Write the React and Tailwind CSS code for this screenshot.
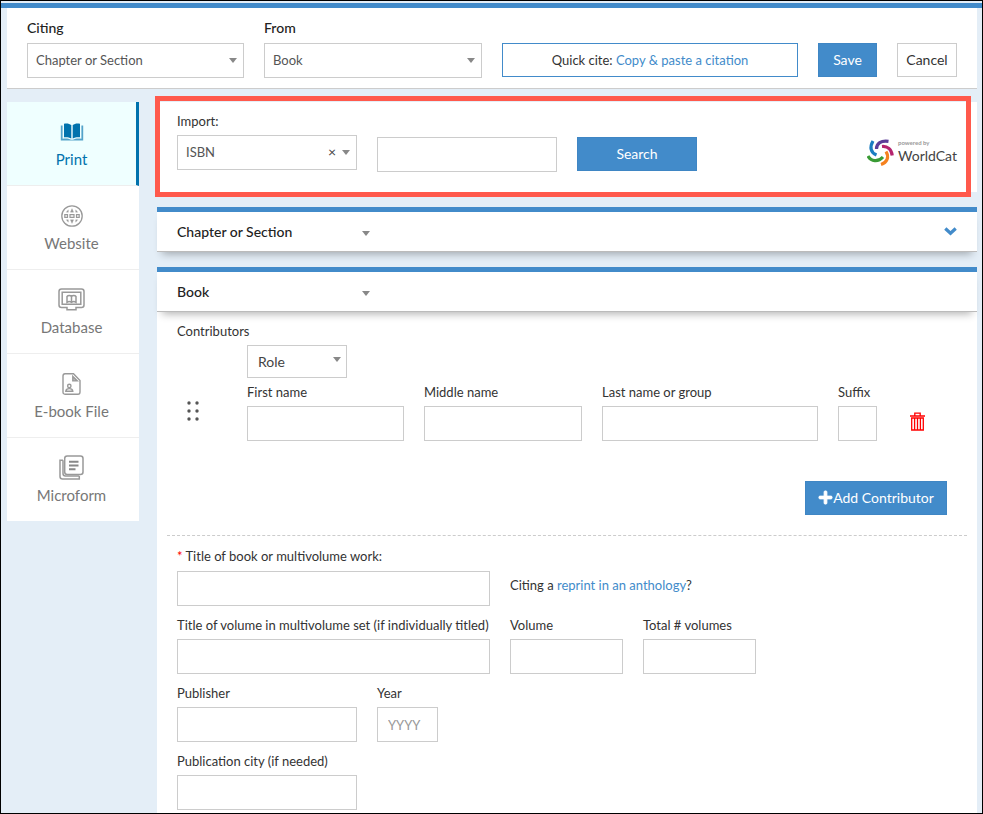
import { FaPlus } from 'react-icons/fa';

const INPUT = 'block w-full h-[35px] border border-[#ccc] bg-white px-[10px] text-[13px] text-[#555] placeholder:text-[#999]';
const SELECT = 'block h-[35px] w-full appearance-none border border-[#ccc] bg-white px-2 pb-0.5 text-[13px] text-[#555]';
const BLUE_BTN = 'bg-[#428bca] h-[34px] pb-px text-sm text-white border border-[#3f86c4] whitespace-nowrap';

function PrintIcon() {
  return (
    <svg width="24" height="18" viewBox="0 0 24 18" fill="currentColor">
      <path d="M4 .8C6.600 0 9.200 .4 11.300 2V15.600C9 14.200 6.400 13.900 4 14.300ZM20 .8C17.400 0 14.800 .4 12.700 2V15.600C15 14.200 17.600 13.900 20 14.300Z" />
      <path d="M.8 2.400H2.600V15.800C5.600 15.200 8.600 15.400 11 16.800H13C15.400 15.400 18.400 15.200 21.400 15.800V2.400H23.200V17.400H.8Z" opacity=".65" />
    </svg>
  );
}

function WebsiteIcon() {
  return (
    <svg width="22" height="22" viewBox="0 0 22 22" fill="none" stroke="currentColor">
      <circle cx="11" cy="11" r="10.200" strokeWidth="1.300" />
      <path d="M3.800 9.700h2.700v2.600H3.800zM9 9.700h4v2.600H9zM15.500 9.700h2.700v2.600H15.500z" strokeWidth="1.200" />
      <path d="M11 3.600L9.400 7.200h3.200ZM11 18.400L9.400 14.800h3.200ZM7.300 4.800L5.300 7.200H7.300ZM14.700 4.800L16.700 7.200H14.700ZM7.300 17.200L5.300 14.800H7.300ZM14.700 17.200L16.700 14.800H14.700Z" fill="currentColor" strokeWidth=".3" />
    </svg>
  );
}

function DatabaseIcon() {
  return (
    <svg width="27" height="23" viewBox="0 0 27 23" fill="none" stroke="currentColor" strokeWidth="1.500">
      <path d="M3.500 1H23.500Q26 1 26 3.500V17Q26 19.500 23.500 19.500H18V21.700H9V19.500H3.500Q1 19.500 1 17V3.500Q1 1 3.500 1Z" />
      <path d="M4.200 4.200H22.800V16.300H4.200Z" />
      <path d="M13.500 8.500C12.500 7 10 7 9 8.500V14.300C10.500 13.300 12 13.300 13.500 14.300C15 13.300 16.500 13.300 18 14.300V8.500C17 7 14.500 7 13.500 8.500V14" strokeWidth="1.500" />
    </svg>
  );
}

function EbookIcon() {
  return (
    <svg width="19" height="22" viewBox="0 0 19 22" fill="none" stroke="currentColor" strokeWidth="1.400">
      <path d="M3 .8H11.500L18 7.500V19Q18 21.200 16 21.200H3Q1 21.200 1 19V3Q1 .8 3 .8Z" />
      <path d="M10.800 3.400V7.900H15.300Z" fill="#bbb" />
      <circle cx="7.300" cy="13" r="1.700" />
      <path d="M3.800 18.200C4 15.800 5.600 15.600 7.300 15.600S10.600 15.800 10.800 18.200Z" />
    </svg>
  );
}

function MicroformIcon() {
  return (
    <svg width="25" height="25" viewBox="0 0 25 25" fill="none" stroke="currentColor" strokeWidth="1.500">
      <rect x="5.700" y="1" width="18.300" height="18.500" rx="2.500" />
      <path d="M4 5.200H1V21.500Q1 24 3.500 24H20.300V21M4 5.200V18.500Q4 21 6.500 21H20.300" />
      <path d="M10 6.700H19.500M10 10.500H19.500M10 14.300H16.500" strokeWidth="2" stroke="#888" />
    </svg>
  );
}

const SOURCES = [
  { label: 'Print', Icon: PrintIcon, active: true },
  { label: 'Website', Icon: WebsiteIcon },
  { label: 'Database', Icon: DatabaseIcon },
  { label: 'E-book File', Icon: EbookIcon },
  { label: 'Microform', Icon: MicroformIcon },
];

function Caret({ className = '' }) {
  return (
    <svg className={`pointer-events-none absolute ${className}`} width="8" height="5" viewBox="0 0 8 5" fill="#888">
      <path d="M0 0H8L4 5Z" />
    </svg>
  );
}

function Field({ id, label, required, placeholder, className = '', labelClass = 'mb-1' }) {
  return (
    <div className={className}>
      <label htmlFor={id} className={`block whitespace-nowrap ${labelClass}`}>
        {required && <span className="text-[#f00]">* </span>}
        {label}
      </label>
      <input id={id} type="text" placeholder={placeholder} className={INPUT} />
    </div>
  );
}

function TopSelect({ id, label, value }) {
  return (
    <div>
      <label htmlFor={id} className="mb-[5px] block text-sm leading-5 font-medium text-[#222]">{label}</label>
      <div className="relative">
        <select id={id} className={SELECT}>
          <option>{value}</option>
        </select>
        <Caret className="right-[7px] top-[15px]" />
      </div>
    </div>
  );
}

function SectionHeader({ title, children }) {
  return (
    <div className="relative flex h-[45px] items-center justify-between border-t-[5px] border-b border-t-[#428bca] border-b-[#bbb] bg-white px-5 shadow-[0_7px_8px_-5px_rgba(0,0,0,0.3)]">
      <div className="relative w-[200px]">
        <select aria-label={`${title} type`} className="block w-full appearance-none bg-transparent text-sm font-medium text-[#222]">
          <option>{title}</option>
        </select>
        <Caret className="right-[7px] top-[9px]" />
      </div>
      {children}
    </div>
  );
}

function WorldCatLogo() {
  return (
    <div className="flex items-start gap-1">
      <svg className="mt-0.5" width="27" height="28" viewBox="0 0 27 28" fill="none" strokeWidth="3.200">
        <path d="M6 2C2.500 8 3.500 13.500 9.500 16" stroke="#1b7dc0" />
        <path d="M9.500 10C9.500 4.500 14 1.200 21.500 2.300" stroke="#5c3d98" />
        <path d="M15 7.500C20.500 7 24.500 10.500 25.200 16.500" stroke="#b5246f" />
        <path d="M19 12.500C22.500 18 20 23.500 14 25.500" stroke="#f5821f" />
        <path d="M1 17C4 22.500 11 23.500 16 18" stroke="#3a9b35" />
      </svg>
      <div className="pt-0.5 text-[#444]">
        <div className="text-[6px] leading-[8px] font-bold text-[#999]">powered by</div>
        <div className="text-sm leading-[17px]">WorldCat</div>
      </div>
    </div>
  );
}

export default function App() {
  return (
    <div className="min-h-screen border border-black bg-[#e4eef7] font-['Lato',sans-serif] text-[13px] leading-5 text-[#333]">
      <div className="mt-0.5 h-[5px] bg-[#428bca]" />
      <header className="mx-1.5 mr-[5px] grid grid-cols-[217fr_218fr_296fr_59px_60px] items-end gap-x-5 border-b border-[#ccc] bg-white px-5 py-[10px]">
        <TopSelect id="citing" label="Citing" value="Chapter or Section" />
        <TopSelect id="from" label="From" value="Book" />
        <div className="mb-px flex h-[34px] items-center justify-center border border-[#428bca] whitespace-nowrap">
          <span>Quick cite: <a href="#quick" className="text-[#428bca]">Copy &amp; paste a citation</a></span>
        </div>
        <button type="button" className={`${BLUE_BTN} mb-px`}>Save</button>
        <button type="button" className="mb-px h-[34px] border border-[#ccc] bg-white pb-px text-sm">Cancel</button>
      </header>

      <div className="ml-1.5 mr-[5px] mt-[13px] flex items-start gap-[18px]">
        <nav className="w-[132px] shrink-0 bg-white">
          {SOURCES.map(({ label, Icon, active }) => (
            <a
              key={label}
              href={`#${label}`}
              className={`flex h-[84px] flex-col items-center border-b text-[15px] leading-5 last:h-[83px] ${active ? 'border-b-[#eee] border-r-[3px] border-r-[#0072ad] bg-[#efffff] text-[#0072ad]' : 'border-[#eee] pr-[3px] text-[#777] last:border-white'}`}
            >
              <span className={`mt-4 flex h-[27px] items-center ${active ? '' : 'text-[#999]'}`}><Icon /></span>
              <span className="mt-1">{label}</span>
            </a>
          ))}
        </nav>

        <main className="min-w-0 flex-1">
          <section className="relative flex h-[90px] gap-5 bg-white px-5 pt-[9px]">
            <div className="w-[180px]">
              <label htmlFor="import" className="mb-1 block">Import:</label>
              <div className="relative">
                <select id="import" className={SELECT}>
                  <option>ISBN</option>
                </select>
                <button type="button" aria-label="Clear" className="absolute right-[21px] top-[7px] text-sm leading-5 text-[#444]">×</button>
                <Caret className="right-[7px] top-[15px]" />
              </div>
            </div>
            <input type="text" aria-label="ISBN" className="mt-[26px] h-[35px] w-[180px] border border-[#ccc] bg-white px-2" />
            <button type="button" className={`${BLUE_BTN} mt-[26px] w-[120px]`}>Search</button>
            <div className="mt-[26px] ml-auto"><WorldCatLogo /></div>
            <div className="pointer-events-none absolute -top-1.5 right-1.5 -bottom-[5px] -left-0.5 z-10 border-[5px] border-[#ff594c]" />
          </section>

          <div className="mt-[15px]">
            <SectionHeader title="Chapter or Section">
              <button type="button" aria-label="Expand" className="text-[#428bca]">
                <svg width="13" height="9" viewBox="0 0 13 9" fill="none" stroke="currentColor" strokeWidth="3.200">
                  <path d="M1.300 1.500L6.500 6.300L11.700 1.500" />
                </svg>
              </button>
            </SectionHeader>
          </div>

          <div className="mt-[15px] bg-white">
            <SectionHeader title="Book" />
            <form className="px-5 pt-[9px] pb-[3px]">
              <div>Contributors</div>
              <div className="mt-1 flex">
                <div className="mt-14 w-[70px] shrink-0 pl-[10px]">
                  <svg width="12" height="20" viewBox="0 0 12 20" fill="#555">
                    <circle cx="2" cy="2" r="1.700" /><circle cx="10" cy="2" r="1.700" />
                    <circle cx="2" cy="10" r="1.700" /><circle cx="10" cy="10" r="1.700" />
                    <circle cx="2" cy="18" r="1.700" /><circle cx="10" cy="18" r="1.700" />
                  </svg>
                </div>
                <div className="flex-1">
                  <div className="relative w-[100px]">
                    <select aria-label="Role" className="block h-[33px] w-full appearance-none border border-[#ccc] bg-white px-[10px] text-sm text-[#444]">
                      <option>Role</option>
                    </select>
                    <Caret className="right-[6px] top-3" />
                  </div>
                  <div className="mt-1 grid grid-cols-[157fr_158fr_216fr_39px] gap-5">
                    <Field id="first" label="First name" />
                    <Field id="middle" label="Middle name" />
                    <Field id="last" label="Last name or group" />
                    <Field id="suffix" label="Suffix" />
                  </div>
                </div>
                <div className="mt-[67px] w-20 shrink-0 pl-[33px]">
                  <button type="button" aria-label="Delete contributor" className="block text-[#f00]">
                    <svg width="15" height="19" viewBox="0 0 15 19" fill="none" stroke="currentColor" strokeWidth="1.300">
                      <path d="M0 4H15M4.800 3.500V1.200H10.200V3.500M1.700 6H13.300V18H1.700Z" />
                      <path d="M4.600 6V18M7.500 6V18M10.400 6V18" />
                    </svg>
                  </button>
                </div>
              </div>
              <div className="mt-10 flex justify-end pr-[10px]">
                <button type="button" className={`${BLUE_BTN} flex w-[142px] items-center justify-center`}>
                  <FaPlus size={15} stroke="currentColor" strokeWidth={30} />Add Contributor
                </button>
              </div>
              <hr className="-mx-[10px] mt-5 mb-[10px] border-dashed border-[#ccc]" />

              <div className="flex gap-5">
                <Field id="title" required label="Title of book or multivolume work:" className="w-[313px]" labelClass="mb-[5px]" />
                <p className="mt-[29px]">Citing a <a href="#reprint" className="text-[#428bca]">reprint in an anthology</a>?</p>
              </div>
              <div className="mt-[9px] flex gap-5">
                <Field id="volume-title" label="Title of volume in multivolume set (if individually titled)" className="w-[313px]" />
                <Field id="volume" label="Volume" className="w-[113px]" />
                <Field id="total" label="Total # volumes" className="w-[113px]" />
              </div>
              <div className="mt-[9px] flex gap-5">
                <Field id="publisher" label="Publisher" className="w-[180px]" />
                <Field id="year" label="Year" placeholder="YYYY" className="w-[61px]" />
              </div>
              <Field id="city" label="Publication city (if needed)" className="mt-[9px] w-[180px]" />
            </form>
          </div>
        </main>
      </div>
    </div>
  );
}
